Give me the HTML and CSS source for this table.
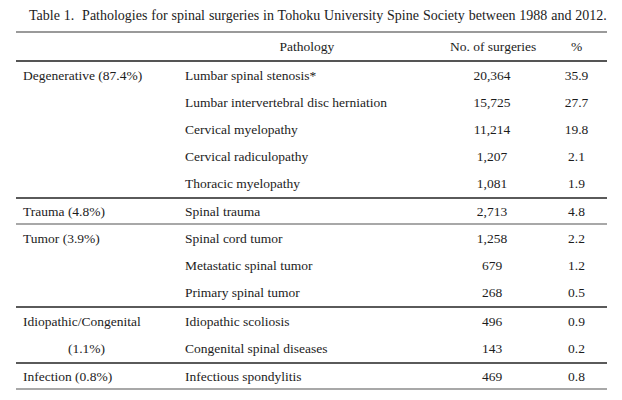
FILE: index.html
```html
<!DOCTYPE html>
<html>
<head>
<meta charset="utf-8">
<link rel="stylesheet" href="styles.css">
</head>
<body>
<p class="caption">Table 1.&nbsp; Pathologies for spinal surgeries in Tohoku University Spine Society between 1988 and 2012.</p>
<table class="tbl">
  <colgroup>
    <col class="c1"><col class="c2"><col class="c3"><col class="c4">
  </colgroup>
  <thead>
    <tr><th></th><th class="hpath">Pathology</th><th class="num">No. of surgeries</th><th class="pct">%</th></tr>
  </thead>
  <tbody class="g dark">
    <tr><td>Degenerative (87.4%)</td><td>Lumbar spinal stenosis*</td><td class="num">20,364</td><td class="pct">35.9</td></tr>
    <tr><td></td><td>Lumbar intervertebral disc herniation</td><td class="num">15,725</td><td class="pct">27.7</td></tr>
    <tr><td></td><td>Cervical myelopathy</td><td class="num">11,214</td><td class="pct">19.8</td></tr>
    <tr><td></td><td>Cervical radiculopathy</td><td class="num">1,207</td><td class="pct">2.1</td></tr>
    <tr><td></td><td>Thoracic myelopathy</td><td class="num">1,081</td><td class="pct">1.9</td></tr>
  </tbody>
  <tbody class="g light single">
    <tr><td>Trauma (4.8%)</td><td>Spinal trauma</td><td class="num">2,713</td><td class="pct">4.8</td></tr>
  </tbody>
  <tbody class="g dark">
    <tr><td>Tumor (3.9%)</td><td>Spinal cord tumor</td><td class="num">1,258</td><td class="pct">2.2</td></tr>
    <tr><td></td><td>Metastatic spinal tumor</td><td class="num">679</td><td class="pct">1.2</td></tr>
    <tr><td></td><td>Primary spinal tumor</td><td class="num">268</td><td class="pct">0.5</td></tr>
  </tbody>
  <tbody class="g dark">
    <tr><td>Idiopathic/Congenital</td><td>Idiopathic scoliosis</td><td class="num">496</td><td class="pct">0.9</td></tr>
    <tr><td class="indent">(1.1%)</td><td>Congenital spinal diseases</td><td class="num">143</td><td class="pct">0.2</td></tr>
  </tbody>
  <tbody class="g light single">
    <tr><td>Infection (0.8%)</td><td>Infectious spondylitis</td><td class="num">469</td><td class="pct">0.8</td></tr>
  </tbody>
</table>
</body>
</html>
```
FILE: styles.css
```css
html, body {
  margin: 0;
  padding: 0;
  background: #fff;
}
body {
  font-family: "Liberation Serif", "Times New Roman", serif;
  font-size: 13.5px;
  color: #1c1c1c;
}
.caption {
  margin: 0;
  padding: 8px 0 0 29px;
  height: 23px;
  line-height: 16px;
  font-size: 14px;
  word-spacing: 0.4px;
  white-space: nowrap;
}
.tbl {
  margin-left: 16px;
  width: 591px;
  border-collapse: collapse;
  table-layout: fixed;
  border-top: 2px solid #9a9a9a;
}
.c1 { width: 162px; }
.c2 { width: 272px; }
.c3 { width: 84px; }
.c4 { width: 73px; }
th, td {
  padding: 0 0 0 7px;
  height: 27px;
  line-height: 15px;
  font-weight: normal;
  text-align: left;
  vertical-align: middle;
  white-space: nowrap;
}
thead th {
  height: 27px;
  border-bottom: 2px solid #555;
}
tbody.single td {
  height: 24px;
}
th.hpath {
  text-align: center;
  padding-left: 0;
  padding-right: 14px;
}
.num {
  text-align: center;
  padding-left: 0;
}
.pct {
  text-align: center;
  padding-left: 12px;
}
td.indent {
  padding-left: 52px;
}
tbody.dark {
  border-bottom: 2px solid #5a5a5a;
}
tbody.light {
  border-bottom: 2px solid #a8a8a8;
}
```
